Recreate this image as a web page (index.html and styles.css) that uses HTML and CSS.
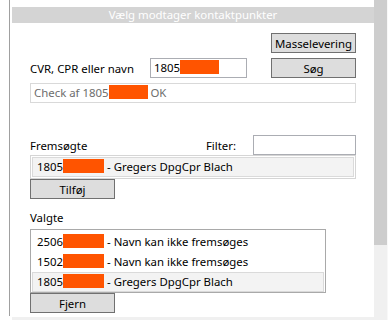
FILE: index.html
```html
<!DOCTYPE html>
<html lang="da">
<head>
  <meta charset="UTF-8">
  <title>Vælg modtager kontaktpunkter</title>
  <link rel="stylesheet" href="styles.css">
</head>
<body>

<div class="window">
  <div class="main">
    <div class="panel">
      <div class="panel-title">Vælg modtager kontaktpunkter</div>
      <div class="panel-body">
        <div class="row row-end">
          <button class="btn">Masselevering</button>
        </div>
        <div class="row search-row">
          <span class="field-label">CVR, CPR eller navn</span>
          <div class="text-input cvr-input">1805<span class="redact"></span></div>
          <button class="btn">Søg</button>
        </div>
        <div class="status-box">Check af 1805<span class="redact"></span> OK</div>

        <div class="row list-head">
          <span class="field-label">Fremsøgte</span>
          <span class="filter-label">Filter:</span>
          <div class="text-input filter-input"></div>
        </div>
        <div class="listbox found">
          <div class="list-item selected">1805<span class="redact"></span> - Gregers DpgCpr Blach</div>
        </div>
        <button class="btn">Tilføj</button>

        <div class="section-label">Valgte</div>
        <div class="listbox chosen">
          <div class="list-item">2506<span class="redact"></span> - Navn kan ikke fremsøges</div>
          <div class="list-item">1502<span class="redact"></span> - Navn kan ikke fremsøges</div>
          <div class="list-item selected">1805<span class="redact"></span> - Gregers DpgCpr Blach</div>
        </div>
        <button class="btn">Fjern</button>
      </div>
    </div>
    <div class="bottom-strip"></div>
  </div>
  <div class="scrollbar"><div class="scroll-thumb"></div></div>
</div>

</body>
</html>
```

FILE: styles.css
```css
body {
  margin: 0;
  font-family: "Noto Sans", Arial, sans-serif;
  font-size: 11.4px;
  color: #000;
  background-color: #fff;
}
.window {
  display: flex;
  height: 320px;
  overflow: hidden;
}
.main {
  flex: 1;
  display: flex;
  flex-direction: column;
}
.panel {
  flex: 1;
  margin-left: 9px;
  border-left: 1px solid #a0a0a0;
  padding: 7px 0 0 2px;
}
.panel-title {
  height: 16px;
  line-height: 16px;
  background-color: #d4d4d4;
  color: #fff;
  text-align: center;
}
.panel-body {
  padding: 10px 18px 0 18px;
}
.bottom-strip {
  height: 3px;
  margin: 1px 0 0 12px;
  background-color: #f0f0f0;
}
.scrollbar {
  width: 13px;
  border-right: 1px solid #f8f8f8;
  background-color: #f0f0f0;
}
.scroll-thumb {
  height: 245px;
  background-color: #cdcdcd;
}
.row {
  display: flex;
  align-items: center;
}
.row-end {
  justify-content: flex-end;
}
.btn {
  box-sizing: border-box;
  width: 85px;
  height: 20px;
  padding: 0;
  font-family: inherit;
  font-size: 11.4px;
  color: #000;
  background-color: #dddddd;
  border: 1px solid #707070;
}
.search-row {
  margin-top: 5px;
}
.search-row .field-label {
  width: 120px;
}
.search-row .btn {
  margin-left: auto;
}
.text-input {
  box-sizing: border-box;
  height: 20px;
  line-height: 18px;
  padding-left: 3px;
  border: 1px solid #abadb3;
  background-color: #fff;
}
.cvr-input {
  width: 97px;
}
.redact {
  display: inline-block;
  width: 40px;
  height: 14px;
  vertical-align: -2px;
  background-color: #ff5400;
}
.cvr-input .redact {
  width: 39px;
}
.status-box {
  box-sizing: border-box;
  height: 20px;
  line-height: 18px;
  margin-top: 5px;
  padding-left: 3px;
  border: 1px solid #d9d9d9;
  color: #6d6d6d;
}
.status-box .redact {
  width: 39px;
}
.list-head {
  margin-top: 32px;
}
.filter-label {
  margin-left: auto;
  margin-right: 17px;
}
.filter-input {
  width: 103px;
}
.listbox {
  box-sizing: border-box;
  background-color: #fff;
}
.found {
  height: 24px;
  padding: 1px;
  border: 1px solid #d5d5d5;
}
.chosen {
  width: 296px;
  height: 64px;
  padding: 2px 1px;
  border: 1px solid #a9a9a9;
}
.list-item {
  box-sizing: border-box;
  height: 20px;
  line-height: 18px;
  padding-left: 4px;
  border: 1px solid transparent;
  white-space: nowrap;
}
.list-item.selected {
  background-color: #f3f3f3;
  border-color: #dadada;
}
.list-item .redact {
  width: 41px;
}
.section-label {
  height: 16px;
  line-height: 16px;
  margin-top: 11px;
  margin-bottom: 3px;
}
```
